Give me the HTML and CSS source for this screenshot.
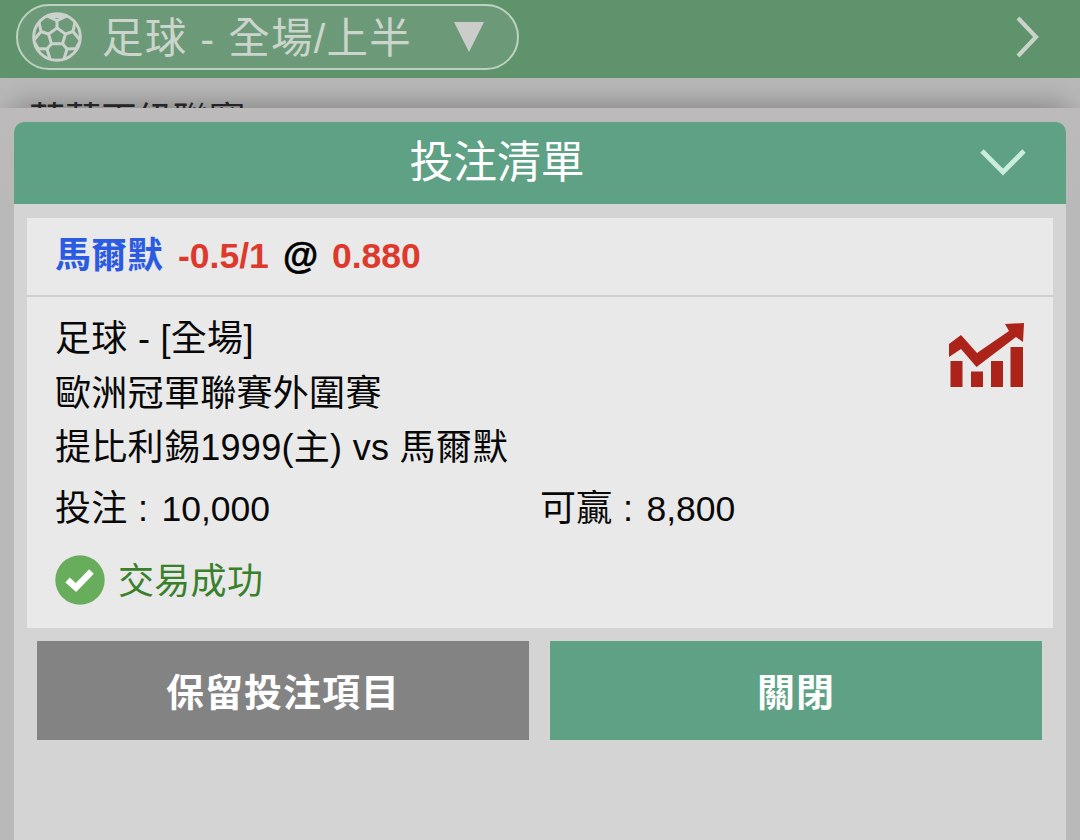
FILE: index.html
```html
<!DOCTYPE html>
<html lang="zh-Hant">
<head>
    <meta charset="UTF-8">
    <meta name="viewport" content="width=device-width, initial-scale=1.0">
    <title>投注清單</title>
    <link rel="stylesheet" href="styles.css">
</head>
<body>
    <header class="topbar">
        <div class="sport-select">
            <svg class="ball" viewBox="0 0 50 50">
                <circle cx="25" cy="25" r="23.3"/>
                <path d="M25 16 L33.500 22 L30.500 31.700 H19.500 L16.500 22 Z"/>
                <path d="M25 16 V8.500 M33.500 22 L41 19.500 M30.500 31.700 L35 37 M19.500 31.700 L15 37 M16.500 22 L9 19.500"/>
                <path d="M15 4 L25 8.500 L35 4 M43 10 L41 19.500 L48 28 M47 31 L44 36.500 L35 37 L32 47 M18 47 L15 37 L6 36.500 L3 31 M2 28 L9 19.500 L7 10"/>
                <path d="M16 4.500 H34"/>
            </svg>
            <span class="sport-name">足球 - 全場/上半</span>
            <svg class="arrow-down" viewBox="0 0 30 30"><path d="M0 0 H30 L15 30 Z"/></svg>
        </div>
        <svg class="arrow-right" viewBox="0 0 24 42"><path d="M2 2 L20 21 L2 40"/></svg>
    </header>

    <div class="league">芬蘭丙級聯賽</div>

    <main class="sheet">
        <div class="slip">
            <div class="slip-header">
                <h1>投注清單</h1>
                <svg class="collapse" viewBox="0 0 46 28"><path d="M2 2 L23 23 L44 2"/></svg>
            </div>

            <div class="bet">
                <div class="bet-title">
                    <span class="team">馬爾默</span>
                    <span class="odds handicap">-0.5/1</span>
                    <span class="at">@</span>
                    <span class="odds">0.880</span>
                </div>
                <div class="bet-body">
                    <svg class="chart" viewBox="0 0 76 66">
                        <path d="M1.500 38 H13.500 V64 H1.500 Z M22 48.500 H34 V64 H22 Z M42 38 H54 V64 H42 Z M61.500 24 H74 V64 H61.500 Z"/>
                        <path d="M0 21 L12 12 L28 30 L60 8 L56 1 L75 0 L74 19 L67 14 L27.500 44 L12 26 L0 34 Z"/>
                    </svg>
                    <p>足球 - [全場]</p>
                    <p>歐洲冠軍聯賽外圍賽</p>
                    <p>提比利錫1999(主) vs 馬爾默</p>
                    <div class="amounts">
                        <p>投注 : <span class="amount">10,000</span></p>
                        <p>可贏 : <span class="amount">8,800</span></p>
                    </div>
                    <div class="status">
                        <svg class="check" viewBox="0 0 50 50">
                            <circle cx="25" cy="25" r="24.7"/>
                            <path d="M12.500 25 L21 32.500 L36.500 16.500"/>
                        </svg>
                        <span>交易成功</span>
                    </div>
                </div>
            </div>

            <div class="buttons">
                <button class="keep">保留投注項目</button>
                <button class="close">關閉</button>
            </div>
        </div>
    </main>
</body>
</html>
```
FILE: styles.css
```css
* {
    box-sizing: border-box;
}
body {
    margin: 0;
    height: 840px;
    display: flex;
    flex-direction: column;
    overflow: hidden;
    background: #b9b9b9;
    font-family: "Liberation Sans", "Noto Sans CJK TC", sans-serif;
    font-size: 36px;
    color: #080808;
}
h1, p {
    margin: 0;
    font-weight: normal;
}
svg {
    display: block;
    flex: none;
}

/* top bar */
.topbar {
    height: 78px;
    flex: none;
    display: flex;
    align-items: flex-start;
    justify-content: space-between;
    padding: 4px 40px 0 16px;
    background: #5e936b;
    position: relative;
    z-index: 2;
}
.sport-select {
    width: 503px;
    height: 66px;
    display: flex;
    align-items: center;
    padding-left: 14px;
    border: 2.5px solid #bdd1c0;
    border-radius: 33px;
    background: #6c9a79;
    color: #cbd5cc;
}
.ball {
    width: 50px;
    height: 50px;
    fill: none;
    stroke: #cbd1cb;
    stroke-width: 3;
}
.sport-name {
    width: 352px;
    margin-left: 20px;
    padding-top: 3px;
    font-size: 41.5px;
    letter-spacing: 1.25px;
    line-height: 60px;
    white-space: nowrap;
}
.arrow-down {
    width: 30px;
    height: 30px;
    fill: #cbcdcb;
}
.arrow-right {
    width: 24px;
    height: 42px;
    margin-top: 12px;
    fill: none;
    stroke: #c9d3c9;
    stroke-width: 4.2;
}

.league {
    height: 30px;
    flex: none;
    padding: 25px 0 0 29px;
    overflow: hidden;
    line-height: 36px;
    color: #252525;
}

/* bet slip */
.sheet {
    flex: 1;
    display: flex;
    padding: 14px 14px 0;
    position: relative;
    background: linear-gradient(#bcbaba, #b9b9b9 100px);
}
.sheet::before {
    content: "";
    position: absolute;
    z-index: -1;
    top: 0;
    left: 12px;
    right: 12px;
    height: 200px;
    box-shadow: 0 0 30px rgba(0, 0, 0, 0.36);
}
.slip {
    flex: 1;
    background: #d4d4d4;
    border-radius: 10px 10px 0 0;
}
.slip-header {
    height: 82px;
    display: flex;
    align-items: center;
    padding: 0 40px 0 0;
    border-radius: 10px 10px 0 0;
    background: #5ea185;
    color: #fff;
}
.slip-header h1 {
    flex: 1;
    margin-top: -1px;
    font-size: 43.8px;
    line-height: 60px;
    text-align: center;
}
.collapse {
    width: 46px;
    height: 28px;
    fill: none;
    stroke: #c9ecdc;
    stroke-width: 4.8;
}
.bet {
    margin: 14px 13px 0;
    background: #e9e9e9;
}
.bet-title {
    height: 79px;
    display: flex;
    align-items: center;
    padding: 0 28px 1px;
    border-bottom: 2px solid #cecece;
    font-weight: bold;
    line-height: 50px;
}
.team {
    width: 123px;
    color: #2b5be2;
}
.odds {
    font-size: 35.5px;
    color: #dd392c;
}
.handicap {
    width: 105px;
}
.at {
    width: 49px;
    color: #000;
    -webkit-text-stroke: 0.6px #000;
}
.bet-body {
    position: relative;
    height: 331px;
    padding: 15px 28px 0;
    letter-spacing: 0.3px;
}
.bet-body p {
    height: 54.5px;
    line-height: 54.5px;
    white-space: nowrap;
}
.chart {
    position: absolute;
    top: 26px;
    right: 28px;
    width: 76px;
    height: 66px;
    fill: #ab2319;
}
.amounts {
    display: grid;
    grid-template-columns: 485px 1fr;
    margin-top: 6px;
}
.amount {
    margin-left: 3px;
    font-size: 35.5px;
    letter-spacing: 0;
}
.status {
    display: flex;
    align-items: center;
    gap: 14px;
    height: 50px;
    margin-top: 19px;
    color: #39802b;
}
.status span {
    margin: -5px 0 0 -1px;
}
.check {
    width: 50px;
    height: 50px;
    fill: #67ad5b;
}
.check path {
    fill: none;
    stroke: #fff;
    stroke-width: 6.5;
}
.buttons {
    display: flex;
    gap: 21px;
    padding: 13px 24px 0 23px;
}
button {
    flex: 1;
    height: 99px;
    padding: 0 0 3px;
    border: none;
    font-family: inherit;
    font-size: 38px;
    font-weight: bold;
    letter-spacing: 1px;
    color: #fff;
}
.keep {
    background: #838383;
}
.close {
    background: #5ea185;
}
```
